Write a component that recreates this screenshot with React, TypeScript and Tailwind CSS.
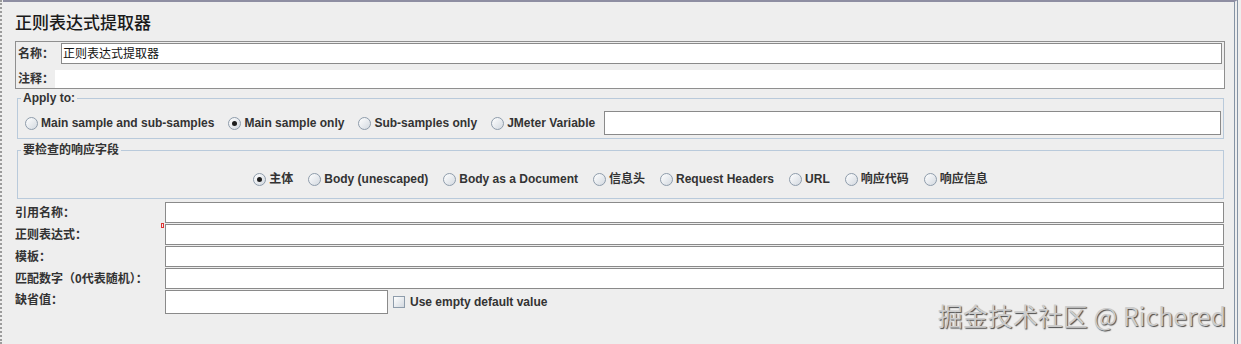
import React from 'react';

function Radio({ checked }: { checked?: boolean }) {
  return (
    <span className="w-[13px] h-[13px] rounded-full border border-[#8e9cab] bg-linear-to-br from-white to-[#d3d9e0] flex items-center justify-center shrink-0">
      {checked && <span className="w-[5px] h-[5px] rounded-full bg-[#1e1e1e]" />}
    </span>
  );
}

function RadioItem({ label, checked }: { label: string; checked?: boolean }) {
  return (
    <label className="flex items-center gap-[3px] whitespace-nowrap">
      <Radio checked={checked} />
      <span>{label}</span>
    </label>
  );
}

const APPLY_TO = [
  { label: 'Main sample and sub-samples' },
  { label: 'Main sample only', checked: true },
  { label: 'Sub-samples only' },
  { label: 'JMeter Variable' },
];

const FIELDS = [
  { label: '主体', checked: true },
  { label: 'Body (unescaped)' },
  { label: 'Body as a Document' },
  { label: '信息头' },
  { label: 'Request Headers' },
  { label: 'URL' },
  { label: '响应代码' },
  { label: '响应信息' },
];

const ROWS = ['引用名称：', '正则表达式：', '模板：', '匹配数字（0代表随机）：'];

export default function App() {
  return (
    <div className="w-[1241px] h-[344px] bg-[#eeeeee] overflow-hidden relative flex font-['Liberation_Sans','Noto_Sans_CJK_SC',sans-serif] text-[12px] leading-[14px] font-bold text-[#333333]">
      {/* dotted splitter on the left */}
      <div className="w-[3px] h-full border-l-2 border-dotted border-[#9c9c9c]" />

      <div className="w-[1235px] h-full border-t-2 border-t-[#8e8ea2] border-r-[4px] border-double border-r-[#8593a4] pl-[12px] pr-[9px] pt-[12px] flex flex-col">
        <h1 className="text-[17px] leading-[20px] font-medium text-[#1a1a1a]">正则表达式提取器</h1>

        {/* name / comment */}
        <div className="mt-[7px] border border-[#8f8f8f] pt-[1px] flex flex-col">
          <div className="flex items-center h-[21px]">
            <span className="w-[45px] pl-[2px]">名称：</span>
            <div className="flex-1 h-full mr-[2px] bg-white border border-[#8a8a8a] px-[1px] flex items-center font-normal text-[#111]">
              正则表达式提取器
            </div>
          </div>
          <div className="flex items-center h-[18px] mt-[6px]">
            <span className="w-[39px] pl-[2px]">注释：</span>
            <div className="flex-1 h-full bg-white" />
          </div>
        </div>

        {/* apply to */}
        <fieldset className="mt-[2px] ml-[2px] mr-[1px] border border-[#b9cadb] pt-[6px] pb-[3px]">
          <legend className="ml-[3px] px-[2px]">Apply to:</legend>
          <div className="flex items-center gap-[14px] pl-[7px] pr-[2px]">
            {APPLY_TO.map(a => (
              <RadioItem key={a.label} label={a.label} checked={a.checked} />
            ))}
            <div className="flex-1 h-[24px] -ml-[5px] bg-white border border-[#8a8a8a]" />
          </div>
        </fieldset>

        {/* response field */}
        <fieldset className="mt-[4px] ml-[2px] mr-[1px] border border-[#b9cadb] pt-[14px] pb-[11px]">
          <legend className="ml-[3px] px-[2px]">要检查的响应字段</legend>
          <div className="flex items-center justify-center gap-[15px] h-[16px]">
            {FIELDS.map(f => (
              <RadioItem key={f.label} label={f.label} checked={f.checked} />
            ))}
          </div>
        </fieldset>

        {/* extractor settings */}
        <div className="mt-[3px] flex flex-col gap-[1px]">
          {ROWS.map((r, i) => (
            <div key={r} className="relative flex items-center h-[21px]">
              <span className="w-[150px] whitespace-nowrap">{r}</span>
              <div className="flex-1 h-full mr-[1px] bg-white border border-[#8a8a8a]" />
              {i === 1 && <span className="absolute left-[146px] -top-[1px] w-[3px] h-[5px] border border-[#dd3333]" />}
            </div>
          ))}
          <div className="flex items-start h-[24px]">
            <span className="w-[150px] leading-[20px]">缺省值：</span>
            <div className="w-[223px] h-full bg-white border border-[#8a8a8a]" />
            <label className="flex items-center gap-[5px] ml-[5px] h-full">
              <span className="w-[12px] h-[12px] border border-[#8e9cab] bg-linear-to-br from-white to-[#d3d9e0]" />
              <span>Use empty default value</span>
            </label>
          </div>
        </div>
      </div>

      {/* watermark */}
      <div className="absolute right-[15px] top-[300px] text-[25px] leading-[30px] font-normal text-[#cccccc] [text-shadow:1px_1px_1px_#4a4a4a] font-['Noto_Sans_CJK_SC','Noto_Sans',sans-serif]">
        掘金技术社区 @ Richered
      </div>
    </div>
  );
}
